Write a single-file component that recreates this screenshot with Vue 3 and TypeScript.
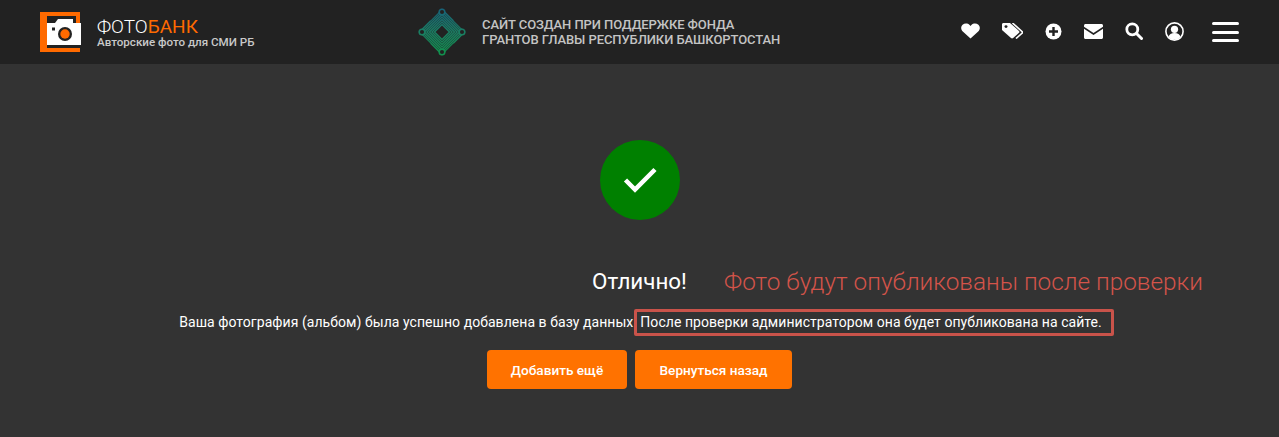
<script setup lang="ts">
const rings: number[] = [7.5, 10, 12.5, 15, 17.5, 20, 22.5]
</script>

<template>
  <div class="page">
    <header class="topbar">
      <a class="brand">
        <svg class="brand-icon" width="42" height="40" viewBox="0 0 42 40">
          <path d="M0 0H40V11H36V4H7V36H40V40H0Z" fill="#ff6a00" />
          <path d="M7 11H15L18 7H33V11H41V33H7Z" fill="#fff" />
          <rect x="12" y="15.500" width="3" height="3" fill="#222" />
          <circle cx="25" cy="22" r="7" fill="#222" />
          <circle cx="25" cy="22" r="4.700" fill="#ff6a00" />
        </svg>
        <span class="brand-text">
          <span class="brand-name">ФОТО<b>БАНК</b></span>
          <span class="brand-sub">Авторские фото для СМИ РБ</span>
        </span>
      </a>

      <div class="grant">
        <svg class="grant-icon" width="50" height="50" viewBox="-25 -25 50 50">
          <defs>
            <linearGradient id="grantGrad" x1="0" y1="-25" x2="0" y2="25" gradientUnits="userSpaceOnUse">
              <stop offset="0" stop-color="#17607a" />
              <stop offset="0.5" stop-color="#1a7d62" />
              <stop offset="1" stop-color="#10934a" />
            </linearGradient>
          </defs>
          <g fill="none" stroke="url(#grantGrad)" stroke-width="1.500">
            <path v-for="r in rings" :key="r" :d="`M0 ${-r}L${r} 0L0 ${r}L${-r} 0Z`" />
            <path d="M-12 -12L-4 -20M12 -12L20 -4M12 12L4 20M-12 12L-20 4" stroke="#222" stroke-width="1.200" />
            <circle cx="0" cy="-20" r="2.800" fill="#222" />
            <circle cx="20" cy="0" r="2.800" fill="#222" />
            <circle cx="0" cy="20" r="2.800" fill="#222" />
            <circle cx="-20" cy="0" r="2.800" fill="#222" />
          </g>
        </svg>
        <div class="grant-text">
          <div>САЙТ СОЗДАН ПРИ ПОДДЕРЖКЕ ФОНДА</div>
          <div>ГРАНТОВ ГЛАВЫ РЕСПУБЛИКИ БАШКОРТОСТАН</div>
        </div>
      </div>

      <nav class="tools">
        <svg class="tool" width="19" height="16" viewBox="0 0 19 17" preserveAspectRatio="none">
          <path d="M9.500 16.500 1.800 9C-.4 6.800-.2 3.600 1.600 1.900 3.600 0 6.800 .2 8.600 2.100l.9 1 .9-1C12.200 .2 15.400 0 17.400 1.900c1.800 1.700 2 4.900-.2 7.100Z" fill="#fff" />
        </svg>
        <svg class="tool" width="21" height="16" viewBox="0 0 21 18" preserveAspectRatio="none">
          <path d="M0 1.500C0 .7.700 0 1.500 0H8l9 9c.6.600.6 1.500 0 2.100l-5.900 5.900c-.6.600-1.500.6-2.100 0L0 8Z" fill="#fff" />
          <circle cx="4" cy="4" r="1.500" fill="#222" />
          <path d="M10.500 0 20 9.500c.6.600.6 1.500 0 2.100L14 17.500" fill="none" stroke="#fff" stroke-width="1.700" />
        </svg>
        <svg class="tool" width="17" height="17" viewBox="0 0 17 17">
          <circle cx="8.500" cy="8.500" r="8" fill="#fff" />
          <path d="M8.500 4v9M4 8.500h9" stroke="#222" stroke-width="2.400" />
        </svg>
        <svg class="tool" width="19" height="15" viewBox="0 0 19 15">
          <path d="M1.500 0h16C18.300 0 19 .7 19 1.500v1.300L9.500 9 0 2.800V1.500C0 .7.700 0 1.500 0Z" fill="#fff" />
          <path d="M0 4.700 9.500 11 19 4.700v8.800c0 .8-.7 1.500-1.500 1.500h-16C.7 15 0 14.300 0 13.500Z" fill="#fff" />
        </svg>
        <svg class="tool" width="18" height="18" viewBox="0 0 18 18">
          <circle cx="7.300" cy="7.300" r="5.500" fill="none" stroke="#fff" stroke-width="2.800" />
          <path d="m11.500 11.500 5 5" stroke="#fff" stroke-width="3" stroke-linecap="round" />
        </svg>
        <svg class="tool" width="19" height="19" viewBox="0 0 19 19">
          <circle cx="9.500" cy="9.500" r="8.600" fill="none" stroke="#fff" stroke-width="1.600" />
          <circle cx="9.500" cy="7.300" r="3.600" fill="#fff" />
          <path d="M3.500 15c.6-2.800 2.800-4 6-4s5.400 1.200 6 4c-1.500 1.600-3.600 2.600-6 2.600S5 16.600 3.500 15Z" fill="#fff" />
        </svg>
        <button class="burger" type="button" aria-label="Меню">
          <span></span><span></span><span></span>
        </button>
      </nav>
    </header>

    <main class="content">
      <div class="success-badge">
        <svg width="34" height="28" viewBox="0 0 34 28">
          <path d="M2.500 14 12 23.500 32 3.500" fill="none" stroke="#fff" stroke-width="4.500" />
        </svg>
      </div>
      <div class="title-wrap">
        <h1 class="title">Отлично!</h1>
        <span class="note">Фото будут опубликованы после проверки</span>
      </div>
      <p class="message">
        Ваша фотография (альбом) была успешно добавлена в базу данных<span class="boxed">После проверки администратором она будет опубликована на сайте.</span>
      </p>
      <div class="actions">
        <a class="btn btn-add">Добавить ещё</a>
        <a class="btn btn-back">Вернуться назад</a>
      </div>
    </main>
  </div>
</template>

<style>
html, body { margin: 0; background: #333; }
</style>

<style scoped>
.page {
  width: 1279px;
  height: 437px;
  overflow: hidden;
  background: #333;
  font-family: Roboto, "Noto Sans", sans-serif;
  color: #fff;
}
.topbar {
  height: 64px;
  box-sizing: border-box;
  background: #222;
  display: flex;
  align-items: center;
  padding: 0 40px;
}
.brand {
  display: flex;
  align-items: center;
  gap: 15px;
  width: 377px;
  flex: none;
}
.brand-icon { flex: none; }
.brand-text { display: flex; flex-direction: column; }
.brand-name {
  font-size: 19px;
  line-height: 19px;
  font-weight: 300;
  color: #fff;
}
.brand-name b { font-weight: 400; color: #ff6a00; }
.brand-sub {
  font-size: 11.600px;
  line-height: 12px;
  font-weight: 500;
  color: #c9c9c9;
}
.grant { display: flex; align-items: center; gap: 15px; flex: none; }
.grant-icon { flex: none; }
.grant-text {
  font-size: 13px;
  line-height: 15px;
  font-weight: 500;
  letter-spacing: -0.08px;
  color: #c4c4c4;
  white-space: nowrap;
}
.tools {
  margin-left: auto;
  display: flex;
  align-items: center;
  gap: 22px;
}
.tool { flex: none; display: block; margin-bottom: 2px; }
.burger {
  width: 27px;
  height: 20px;
  margin-left: 6px;
  padding: 0;
  border: 0;
  background: none;
  display: flex;
  flex-direction: column;
  justify-content: space-between;
}
.burger span { display: block; height: 3px; border-radius: 2px; background: #fff; }
.content {
  display: flex;
  flex-direction: column;
  align-items: center;
  padding-top: 76px;
}
.success-badge {
  width: 80px;
  height: 80px;
  border-radius: 50%;
  background: #008000;
  display: flex;
  align-items: center;
  justify-content: center;
}
.title-wrap { position: relative; margin-top: 46px; }
.title {
  margin: 0;
  font-size: 22.400px;
  line-height: 30px;
  font-weight: 400;
  color: #fff;
}
.note {
  position: absolute;
  left: 132px;
  top: 1px;
  font-size: 24.350px;
  line-height: 30px;
  font-weight: 300;
  white-space: nowrap;
  color: #d4544a;
}
.message {
  margin: 16px 0 0;
  padding-left: 14px;
  font-size: 14px;
  line-height: 20px;
  font-weight: 400;
  letter-spacing: 0.05px;
  white-space: nowrap;
  color: #fff;
}
.boxed {
  display: inline-block;
  margin-left: 1px;
  padding: 0 9px 0 3px;
  line-height: 21px;
  border: 3px solid #c9534a;
  border-radius: 2px;
  margin-top: -4px;
  margin-bottom: -3px;
}
.actions { display: flex; gap: 8px; margin-top: 17px; }
.btn {
  height: 39px;
  box-sizing: border-box;
  display: flex;
  align-items: center;
  justify-content: center;
  border-radius: 4px;
  background: #ff7200;
  color: #fff;
  font-size: 13.600px;
  font-weight: 500;
}
.btn-add { width: 140px; }
.btn-back { width: 157px; }
</style>
